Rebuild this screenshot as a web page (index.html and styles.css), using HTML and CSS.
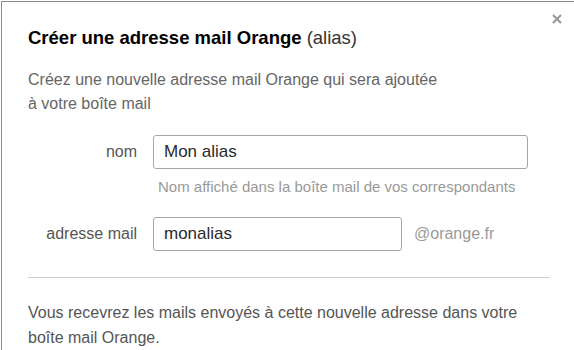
FILE: index.html
```html
<!DOCTYPE html>
<html lang="fr">
<head>
<meta charset="utf-8">
<title>Créer une adresse mail Orange</title>
<link rel="stylesheet" href="styles.css">
</head>
<body>
<div class="dialog">
  <button class="close" aria-label="Fermer">
    <svg width="10" height="10" viewBox="0 0 10 10"><path d="M1 1L9 9M9 1L1 9" stroke="#9a9a9a" stroke-width="2.2" stroke-linecap="butt"/></svg>
  </button>
  <h1 class="title">Créer une adresse mail Orange <span class="alias">(alias)</span></h1>
  <p class="intro">Créez une nouvelle adresse mail Orange qui sera ajoutée<br>à votre boîte mail</p>
  <div class="form">
    <div class="row">
      <label class="label" for="nom">nom</label>
      <div class="field">
        <input id="nom" class="input wide" type="text" value="Mon alias">
        <div class="hint">Nom affiché dans la boîte mail de vos correspondants</div>
      </div>
    </div>
    <div class="row">
      <label class="label" for="addr">adresse mail</label>
      <div class="field inline">
        <input id="addr" class="input narrow" type="text" value="monalias">
        <span class="domain">@orange.fr</span>
      </div>
    </div>
  </div>
  <hr class="sep">
  <p class="note">Vous recevrez les mails envoyés à cette nouvelle adresse dans votre<br>boîte mail Orange.</p>
</div>
</body>
</html>
```
FILE: styles.css
```css
html, body {
  margin: 0;
  padding: 0;
  background: #fff;
}
body {
  padding: 1px 0 0 1px;
  font-family: "Liberation Sans", Arial, sans-serif;
  height: 350px;
  box-sizing: border-box;
  overflow: hidden;
}
.dialog {
  position: relative;
  border-top: 1px solid #8c8c8c;
  border-left: 1px solid #8c8c8c;
  height: 400px;
  padding: 0 24px 0 26px;
  box-sizing: border-box;
}
.close {
  position: absolute;
  top: 12px;
  right: 12px;
  border: 0;
  background: none;
  padding: 0;
  width: 10px;
  height: 10px;
  display: flex;
}
.title {
  margin: 0;
  padding-top: 25px;
  font-size: 18.5px;
  line-height: 22px;
  font-weight: bold;
  color: #000;
}
.alias {
  font-weight: normal;
  color: #333;
}
.intro {
  margin: 19px 0 0;
  font-size: 16px;
  line-height: 24px;
  color: #666;
}
.form {
  margin-top: 19px;
  display: flex;
  flex-direction: column;
  gap: 21px;
}
.row {
  display: flex;
  align-items: flex-start;
  gap: 16px;
}
.label {
  width: 109px;
  text-align: right;
  font-size: 16px;
  color: #555;
  line-height: 34px;
}
.field.inline {
  display: flex;
  align-items: center;
  gap: 12px;
}
.input {
  box-sizing: border-box;
  height: 34px;
  border: 1px solid #a6a6a6;
  border-radius: 3px;
  padding: 0 10px;
  font-family: "Liberation Sans", Arial, sans-serif;
  font-size: 17px;
  color: #2a2a2a;
  background: #fff;
  outline: none;
}
.wide { width: 375px; }
.narrow { width: 249px; }
.hint {
  margin-top: 9px;
  padding-left: 5px;
  font-size: 15px;
  line-height: 18px;
  color: #999;
}
.domain {
  font-size: 16px;
  color: #999;
}
.sep {
  margin: 26px 0 0;
  border: 0;
  border-top: 1px solid #cfcfcf;
}
.note {
  margin: 22px 0 0;
  font-size: 16px;
  line-height: 25px;
  color: #555;
}
```
